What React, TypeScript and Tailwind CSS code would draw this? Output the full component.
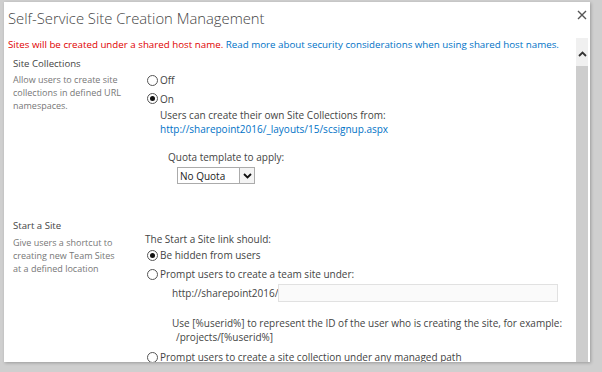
import React from "react";

const FONT = { fontFamily: "'Open Sans', 'Noto Sans', sans-serif" };

function Radio({ checked }: { checked?: boolean }) {
  return (
    <span className="ml-[2px] mr-[2px] flex h-[11px] w-[11px] shrink-0 items-center justify-center rounded-full border border-[#555] bg-white">
      {checked && <span className="h-[5px] w-[5px] rounded-full bg-[#111]" />}
    </span>
  );
}

function RadioRow({ checked, label, h }: { checked?: boolean; label: string; h: string }) {
  return (
    <div className={`flex items-center ${h}`}>
      <Radio checked={checked} />
      <span className="text-[#444]">{label}</span>
    </div>
  );
}

export default function App() {
  return (
    <div
      className="flex h-[372px] w-[602px] flex-col bg-[#cfcfcf] pb-[10px] pl-[4px] pr-[12px] pt-[2px] text-[10px] leading-[14px]"
      style={FONT}
    >
      <div className="flex min-h-0 flex-1 flex-col overflow-hidden bg-white shadow-[1px_1px_3px_rgba(0,0,0,0.25)]">
        {/* title bar */}
        <div className="flex h-[36px] shrink-0 items-start justify-between">
          <div className="pl-[4px] pt-[5px] text-[14.8px] font-light leading-[22px] text-[#444]">
            Self-Service Site Creation Management
          </div>
          <svg className="mr-[3px] mt-[8px]" width="10" height="10" viewBox="0 0 10 10">
            <path d="M1 1 L9 9 M9 1 L1 9" stroke="#555" strokeWidth="1.4" />
          </svg>
        </div>

        {/* body */}
        <div className="flex min-h-0 flex-1">
          <div className="min-w-0 flex-1 overflow-hidden">
            <div className="whitespace-nowrap pl-[4px] text-[9.75px] leading-[14px]">
              <span className="text-[#e00000]">Sites will be created under a shared host name. </span>
              <span className="text-[#0072c6]">Read more about security considerations when using shared host names.</span>
            </div>

            {/* Site Collections */}
            <div className="mt-[5px] flex">
              <div className="w-[141px] shrink-0 pl-[9px]">
                <div className="text-[9.6px] text-[#444]">Site Collections</div>
                <div className="w-[112px] pt-[2px] text-[9px] leading-[13px] text-[#777]">
                  Allow users to create site collections in defined URL namespaces.
                </div>
              </div>
              <div className="flex-1 pt-[14px]">
                <RadioRow label="Off" h="h-[18px]" />
                <RadioRow label="On" checked h="h-[19px]" />
                <div className="pl-[15px] text-[#444]">Users can create their own Site Collections from:</div>
                <div className="pl-[15px] text-[#0072c6]">http://sharepoint2016/_layouts/15/scsignup.aspx</div>
                <div className="mt-[14px] pl-[23px] text-[#444]">Quota template to apply:</div>
                <div className="ml-[32px] mt-[3px] flex h-[17px] w-[78px] items-center border border-[#ababab] bg-white">
                  <span className="flex-1 pl-[2px] text-[#222]">No Quota</span>
                  <span className="flex h-[15px] w-[15px] items-center justify-center border-l border-[#ababab] bg-[#f4f4f4]">
                    <svg width="9" height="6" viewBox="0 0 9 6">
                      <path d="M1 1 L4.5 4.5 L8 1" stroke="#111" strokeWidth="1.8" fill="none" />
                    </svg>
                  </span>
                </div>
              </div>
            </div>

            {/* Start a Site */}
            <div className="mt-[35px] flex">
              <div className="w-[141px] shrink-0 pl-[9px]">
                <div className="text-[9.6px] text-[#444]">Start a Site</div>
                <div className="w-[112px] pt-[3px] text-[9px] leading-[13px] text-[#777]">
                  Give users a shortcut to creating new Team Sites at a defined location
                </div>
              </div>
              <div className="flex-1 pt-[13px]">
                <div className="text-[#444]">The Start a Site link should:</div>
                <RadioRow label="Be hidden from users" checked h="h-[18px]" />
                <RadioRow label="Prompt users to create a team site under:" h="h-[20px]" />
                <div className="flex h-[18px] items-center pl-[27px]">
                  <span className="text-[#444]">http://sharepoint2016/</span>
                  <span className="h-[18px] w-[280px] border border-[#e1e1e1] bg-[#fafafa]" />
                </div>
                <div className="mt-[14px] pl-[27px] text-[#444]">
                  Use [%userid%] to represent the ID of the user who is creating the site, for example:
                </div>
                <div className="pl-[31px] text-[#444]">/projects/[%userid%]</div>
                <div className="mt-[4px]">
                  <RadioRow label="Prompt users to create a site collection under any managed path" h="h-[18px]" />
                </div>
              </div>
            </div>
          </div>

          {/* scrollbar */}
          <div className="mr-[2px] flex w-[12px] shrink-0 flex-col">
            <div className="flex h-[28px] items-center justify-center bg-[#f0f0f0] pt-[4px]">
              <svg width="9" height="6" viewBox="0 0 9 6">
                <path d="M1 5 L4.5 1.5 L8 5" stroke="#333" strokeWidth="1.8" fill="none" />
              </svg>
            </div>
            <div className="flex-1 bg-[#cdcdcd]" />
          </div>
        </div>
      </div>
    </div>
  );
}
